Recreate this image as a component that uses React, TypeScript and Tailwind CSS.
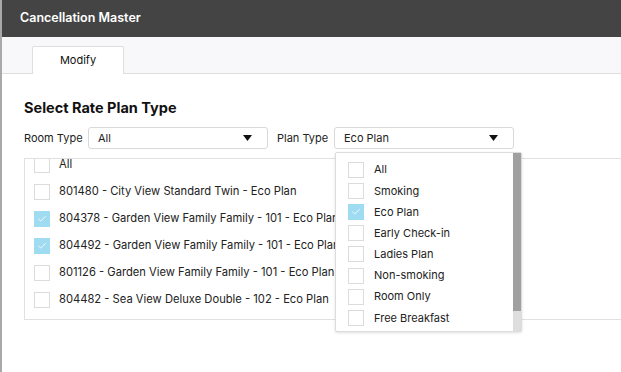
import { Check } from "lucide-react";

const rows = [
  { label: "All", checked: false },
  { label: "801480 - City View Standard Twin - Eco Plan", checked: false },
  { label: "804378 - Garden View Family Family - 101 - Eco Plan", checked: true },
  { label: "804492 - Garden View Family Family - 101 - Eco Plan", checked: true },
  { label: "801126 - Garden View Family Family - 101 - Eco Plan", checked: false },
  { label: "804482 - Sea View Deluxe Double - 102 - Eco Plan", checked: false },
];

const plans = [
  { label: "All", checked: false },
  { label: "Smoking", checked: false },
  { label: "Eco Plan", checked: true },
  { label: "Early Check-in", checked: false },
  { label: "Ladies Plan", checked: false },
  { label: "Non-smoking", checked: false },
  { label: "Room Only", checked: false },
  { label: "Free Breakfast", checked: false },
];

function Box({ checked }: { checked: boolean }) {
  return checked ? (
    <span className="w-4 h-4 shrink-0 bg-[#9fdcf1] flex items-center justify-center">
      <Check className="w-[10px] h-[10px] text-white" strokeWidth={2} />
    </span>
  ) : (
    <span className="w-4 h-4 shrink-0 border border-[#dcdcdc] bg-white" />
  );
}

function Select({ value, width }: { value: string; width: string }) {
  return (
    <div className={`${width} h-[22px] border border-[#d9d9d9] rounded-[3px] flex items-center justify-between pl-[9px] pr-[15px] text-[11px] text-[#222]`}>
      <span>{value}</span>
      <svg width="9" height="6" viewBox="0 0 9 6">
        <path d="M0 0h9L4.5 6z" fill="#111" />
      </svg>
    </div>
  );
}

export default function App() {
  return (
    <div className="w-[621px] h-[372px] overflow-hidden flex bg-white relative" style={{ fontFamily: "Inter, 'Noto Sans', sans-serif" }}>
      {/* backdrop sliver */}
      <div className="w-[2px] bg-[#a9a9a9] shrink-0" />

      <div className="flex-1 flex flex-col">
        <div className="h-[37px] bg-[#444444] flex items-center pl-[18px] text-white text-[12.5px] font-semibold">
          Cancellation Master
        </div>

        <div className="h-[37px] bg-[#f8f7fa] border-b border-[#dedede] flex items-end pl-[30px]">
          <div className="w-[92px] h-[28px] bg-white border border-b-0 border-[#dedede] rounded-t-[2px] flex items-center justify-center text-[11px] text-[#111] mb-[-1px]">
            Modify
          </div>
        </div>

        <div className="pl-[22px] flex flex-col">
          <h2 className="mt-[25px] text-[14.5px] font-bold text-[#111] leading-[18px]">Select Rate Plan Type</h2>

          <div className="mt-[10px] flex items-center text-[11px] text-[#222]">
            <span className="w-[64px]">Room Type</span>
            <Select value="All" width="w-[180px]" />
            <span className="ml-[9px] w-[57px]">Plan Type</span>
            <Select value="Eco Plan" width="w-[180px]" />
          </div>

          <div className="mt-[9px] h-[162px] border border-[#e0e0e0] mr-[-2px] overflow-hidden">
            <div className="mt-[-8px] pl-[9px] flex flex-col">
              {rows.map((r) => (
                <div key={r.label} className="h-[27px] flex items-center gap-[9px] text-[11.2px] text-[#222]">
                  <Box checked={r.checked} />
                  <span className="whitespace-nowrap">{r.label}</span>
                </div>
              ))}
            </div>
          </div>
        </div>
      </div>

      {/* plan type dropdown */}
      <div className="absolute left-[335px] top-[152px] w-[187px] h-[180px] bg-white border border-[#dcdcdc] rounded-[2px] shadow-[0_1px_3px_rgba(0,0,0,0.12)] flex">
        <div className="flex-1 pt-[6px] pl-[12px] flex flex-col">
          {plans.map((p) => (
            <div key={p.label} className="h-[21.2px] flex items-center gap-[10px] text-[11px] text-[#222]">
              <Box checked={p.checked} />
              <span>{p.label}</span>
            </div>
          ))}
        </div>
        <div className="w-[8px] bg-[#dedede] flex flex-col">
          <div className="h-[158px] bg-[#a0a0a0]" />
        </div>
      </div>
    </div>
  );
}
